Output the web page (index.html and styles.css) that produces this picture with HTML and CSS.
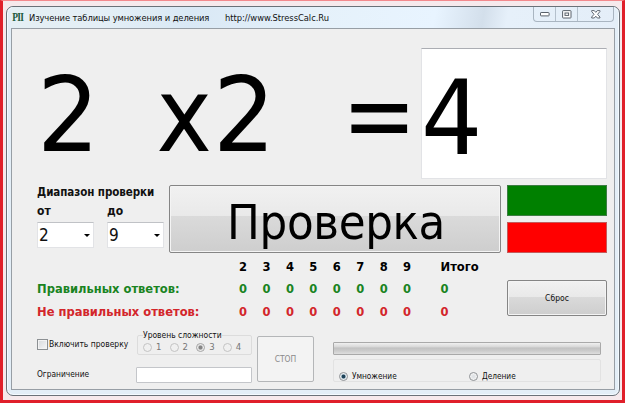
FILE: index.html
```html
<!DOCTYPE html>
<html lang="ru">
<head>
<meta charset="utf-8">
<title>Изучение таблицы умножения и деления</title>
<link rel="stylesheet" href="styles.css">
</head>
<body>
<div class="window">
  <header class="titlebar">
    <span class="logo">PII</span>
    <span class="title">Изучение таблицы умножения и деления</span>
    <span class="url">http://www.StressCalc.Ru</span>
    <div class="controls">
      <span class="control"><svg width="10" height="6" viewBox="0 0 10 6"><rect x=".5" y="1.5" width="8.6" height="3.4" rx=".6" fill="#fff" stroke="#59616b"/></svg></span>
      <span class="control"><svg width="10" height="9" viewBox="0 0 10 9"><rect x=".6" y=".6" width="8.4" height="7.4" rx=".6" fill="#fff" stroke="#59616b"/><rect x="3" y="3" width="3.6" height="2.4" fill="#fff" stroke="#59616b"/></svg></span>
      <span class="control wide"><svg width="10" height="9" viewBox="0 0 10 9"><path d="M.7.6h2.6L4.8 2.4 6.3.6h2.6v1L6.6 4.3 8.9 7v1H6.3L4.8 6.2 3.3 8H.7V7L3 4.3.7 1.6z" fill="#fff" stroke="#59616b" stroke-width=".95"/></svg></span>
    </div>
  </header>
  <main class="client">
    <section class="expression">
      <span class="big first">2</span>
      <span class="big times">x</span>
      <span class="big second">2</span>
      <span class="big equals">=</span>
      <div class="answer"><span class="big">4</span></div>
    </section>

    <section class="check">
      <div class="range">
        <div class="range-title">Диапазон проверки</div>
        <div class="range-fields">
          <div class="field"><span class="field-label">от</span><div class="combo"><span>2</span><i class="arrow"></i></div></div>
          <div class="field"><span class="field-label">до</span><div class="combo"><span>9</span><i class="arrow"></i></div></div>
        </div>
      </div>
      <div class="button verify"><span>Проверка</span></div>
      <div class="lamps"><div class="lamp green"></div><div class="lamp red"></div></div>
    </section>

    <section class="results">
      <div class="scores">
        <div class="row"><span></span><b>2</b><b>3</b><b>4</b><b>5</b><b>6</b><b>7</b><b>8</b><b>9</b><b class="total">Итого</b></div>
        <div class="row right"><span>Правильных ответов:</span><b>0</b><b>0</b><b>0</b><b>0</b><b>0</b><b>0</b><b>0</b><b>0</b><b class="total">0</b></div>
        <div class="row wrong"><span>Не правильных ответов:</span><b>0</b><b>0</b><b>0</b><b>0</b><b>0</b><b>0</b><b>0</b><b>0</b><b class="total">0</b></div>
      </div>
      <div class="button reset"><span>Сброс</span></div>
    </section>

    <section class="options">
      <div class="labels">
        <div class="enable"><i class="checkbox"></i>Включить проверку</div>
        <div class="limit">Ограничение</div>
      </div>
      <div class="difficulty">
        <fieldset class="levels">
          <legend>Уровень сложности</legend>
          <span class="level"><i class="radio dim"></i>1</span>
          <span class="level"><i class="radio dim"></i>2</span>
          <span class="level"><i class="radio dim on"></i>3</span>
          <span class="level"><i class="radio dim"></i>4</span>
        </fieldset>
        <div class="textbox"></div>
      </div>
      <div class="stop"><span>СТОП</span></div>
      <div class="mode">
        <div class="progress"></div>
        <div class="operations">
          <span class="operation"><i class="radio on"></i>Умножение</span>
          <span class="operation"><i class="radio"></i>Деление</span>
        </div>
      </div>
    </section>
  </main>
</div>
</body>
</html>
```
FILE: styles.css
```css
* { box-sizing: border-box; }

body {
  margin: 0;
  width: 625px;
  height: 403px;
  padding: 5px 2px 0 2px;
  border: solid #e01f2a;
  border-width: 1px 3px 3px 3px;
  border-top-color: #f3898d;
  background: #f6e9ec;
  font: 8.45px/11px "DejaVu Sans Condensed", "DejaVu Sans", sans-serif;
  color: #111;
  overflow: hidden;
}

.window {
  width: 614px;
  height: 390px;
  margin-left: 1px;
  border: 1px solid #6a7178;
  border-radius: 7px;
  background: #e3eef7;
  padding: 0 4px 5px;
  box-shadow: inset 0 0 0 1px #f4faff;
}

.titlebar {
  height: 21px;
  display: flex;
  position: relative;
  font-size: 9.3px;
  line-height: 21px;
  background: linear-gradient(100deg, #e4eff4 0, #e4eff6 15%, #d9e8f5 30%, #e5f1fa 50%, #e8f4ff 70%, #d3dfeb 78%, #e6f0fa 82%, #e4eef8 100%);
}
.logo {
  width: 18px;
  padding-left: 1.5px;
  font: bold 11.5px/20px "Liberation Serif", serif;
  letter-spacing: -.9px;
  color: #1c5a3c;
  transform: scaleX(.82);
  transform-origin: left;
}
.title { width: 196px; letter-spacing: -.1px; white-space: nowrap; }
.url { letter-spacing: -.04px; }

.controls {
  position: absolute;
  top: 0;
  right: 1px;
  display: flex;
  height: 15px;
  border: 1px solid #a9b5c1;
  border-top: 0;
  border-radius: 0 0 4px 4px;
}
.control {
  width: 22px;
  display: flex;
  align-items: center;
  justify-content: center;
  border-right: 1px solid #b4c0cc;
}
.control.wide { width: 35px; border: 0; }

.client {
  height: 362px;
  border: 1px solid #979ea5;
  background: #efefef;
}

.expression {
  height: 156px;
  display: flex;
  padding: 19px 0 0 25px;
}
.big {
  display: block;
  margin-top: 2px;
  font-size: 104px;
  line-height: 131px;
  height: 131px;
  color: #000;
  transform-origin: left;
}
.first { width: 119.5px; transform: scaleX(1.05); }
.times { width: 56px; }
.second { width: 129.5px; transform: scaleX(1.05); }
.equals { width: 79px; transform: scaleX(.95); }
.answer {
  width: 186px;
  height: 131px;
  background: #fff;
  border: 1px solid #e2e3e6;
  border-top-color: #abadb3;
}
.answer .big { margin: 4px 0 0 -1px; height: 120px; transform: scaleX(1.03); }

.check { height: 68px; display: flex; padding-left: 25px; }
.range { width: 132px; }
.range-title {
  font-size: 11.5px;
  font-weight: bold;
  line-height: 14px;
  letter-spacing: -.07px;
  white-space: nowrap;
}
.range-fields { display: flex; gap: 13px; margin-top: 4px; }
.field { width: 57px; }
.field-label {
  display: block;
  font-size: 12px;
  font-weight: bold;
  line-height: 16px;
}
.combo {
  height: 26px;
  margin-top: 3px;
  padding: 0 3px 0 1px;
  display: flex;
  align-items: center;
  justify-content: space-between;
  background: #fff;
  border: 1px solid #e2e3e6;
  border-top-color: #c0c2c6;
  font-size: 17px;
  line-height: 24px;
}
.arrow {
  border: solid transparent;
  border-width: 3.5px 3px 0;
  border-top-color: #000;
}

.button {
  display: flex;
  align-items: center;
  justify-content: center;
  border: 1px solid #858585;
  border-radius: 2px;
  background: linear-gradient(#f1f1f1 0, #e9e9e9 46%, #dadada 46%, #cecece 100%);
  box-shadow: inset 0 0 0 1px #f4f4f4;
}
.verify { width: 332px; height: 68px; font-size: 48.5px; line-height: 66px; color: #000; }
.verify span { letter-spacing: -.35px; transform: translate(1px, 3px); }
.lamps { margin-left: 6px; width: 100px; display: grid; gap: 6px; }
.lamp { border: 1px solid #777; }
.lamp.green { background: #008000; border-color: #3d7d43; }
.lamp.red { background: #f00; border-color: #c45a5a; }

.results { height: 72px; display: flex; padding: 2.5px 0 0 25px; }
.scores { width: 470px; font-size: 12.8px; line-height: 22.5px; font-weight: bold; }
.row {
  display: grid;
  grid-template-columns: 202px repeat(8, 23.45px) 1fr;
  white-space: nowrap;
  color: #000;
}
.total { padding-left: 14px; }
.right { color: #1a841f; }
.wrong { color: #d3262b; }
.reset { width: 100px; height: 36px; margin-top: 24px; padding-top: 2px; font-size: 8.5px; }

.options { display: flex; padding-left: 25px; }
.labels { width: 99px; }
.enable {
  display: flex;
  align-items: center;
  gap: 1px;
  height: 12px;
  margin-top: 13px;
  white-space: nowrap;
}
.checkbox {
  width: 11px;
  height: 11px;
  border: 1px solid #8c9093;
  background: linear-gradient(135deg, #d6d9dc, #f6f6f6);
  box-shadow: inset 0 0 0 1px #f3f3f3;
}
.limit { margin-top: 19px; font-size: 8.3px; }

.difficulty { width: 121px; }
.levels {
  width: 115px;
  height: 25px;
  margin: 5px 0 0 1px;
  padding: 1px 0 0 5px;
  border: 1px solid #dcdcdc;
  border-radius: 2px;
  display: flex;
  color: #777;
}
.levels legend {
  height: 11px;
  padding: 0;
  line-height: 11px;
  color: #111;
}
.level { display: flex; align-items: center; gap: 4px; width: 26.6px; height: 10px; font-size: 9.5px; line-height: 10px; }
.radio {
  flex: none;
  width: 9px;
  height: 9px;
  border: 1px solid #8e9195;
  border-radius: 50%;
  background: radial-gradient(circle, #e0e3e6 20%, #f5f5f5 70%);
}
.radio.on { background: radial-gradient(circle, #1d4258 0 32%, #a9bdc9 44%, #f0f3f5 62%); }
.radio.dim { border-color: #c3c3c3; background: #f0f0f0; }
.radio.dim.on { border-color: #a4a4a4; background: radial-gradient(circle, #858585 0 32%, #c4c4c4 44%, #f0f0f0 62%); }
.textbox {
  width: 116px;
  height: 16px;
  margin-top: 12px;
  background: #fff;
  border: 1px solid #c4c6ca;
  border-radius: 1px;
}

.stop {
  width: 57px;
  height: 46px;
  margin-top: 11px;
  display: flex;
  align-items: center;
  justify-content: center;
  border: 1px solid #b4b6b8;
  border-radius: 2px;
  background: #f3f3f3;
  color: #8a8a8a;
}

.mode { width: 268px; margin: 17px 0 0 19px; }
.progress {
  height: 13px;
  border: 1px solid #a9a9a9;
  border-radius: 1px;
  background: linear-gradient(#f0f0f0 0, #d8d8d8 35%, #c2c2c2 45%, #cbcbcb 70%, #dedede 100%);
}
.operations {
  display: grid;
  grid-template-columns: 130px 1fr;
  height: 23px;
  margin-top: 4px;
  padding: 11px 0 0 5px;
  border: 1px solid #e2e2e2;
  border-radius: 2px;
  font-size: 8.2px;
}
.operation { display: flex; align-items: center; gap: 4px; height: 11px; }
```
